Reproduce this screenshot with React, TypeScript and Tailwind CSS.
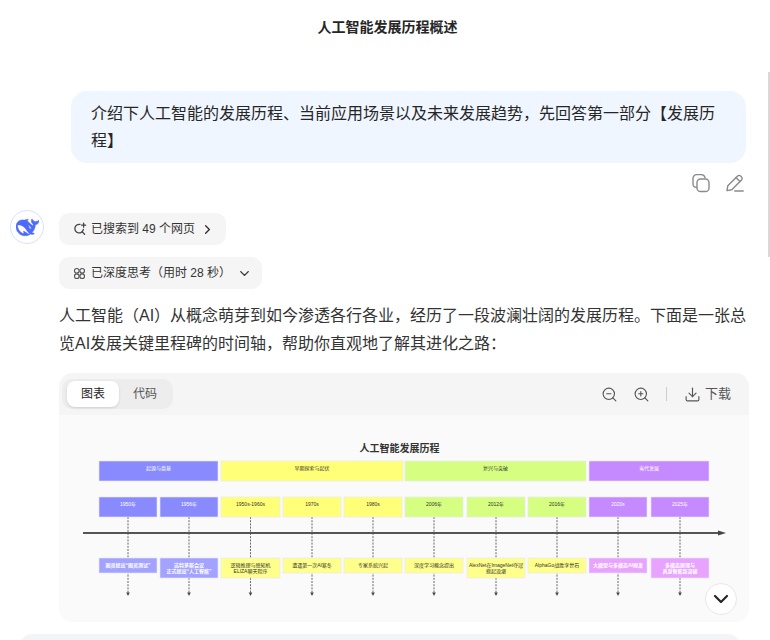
import React from "react";
import { ChevronRight, ChevronDown, ZoomIn, ZoomOut, Download } from "lucide-react";

const FONT = "'Liberation Sans','Noto Sans CJK SC',sans-serif";

type Box = { x: number; w: number; t: string; fill: string; c: string };
const periods: Box[] = [
  { x: 99, w: 119, t: "起源与奠基", fill: "#8a8aff", c: "#ffffff" },
  { x: 221, w: 182, t: "早期探索与起伏", fill: "#ffff78", c: "#333333" },
  { x: 405, w: 181, t: "复兴与突破", fill: "#d6ff82", c: "#333333" },
  { x: 589, w: 120, t: "当代发展", fill: "#c58aff", c: "#ffffff" },
];
const years: Box[] = [
  { x: 99, w: 58, t: "1950年", fill: "#8a8aff", c: "#ffffff" },
  { x: 160, w: 58, t: "1956年", fill: "#8a8aff", c: "#ffffff" },
  { x: 221, w: 59, t: "1950s-1960s", fill: "#ffff78", c: "#333333" },
  { x: 283, w: 58, t: "1970s", fill: "#ffff78", c: "#333333" },
  { x: 344, w: 58, t: "1980s", fill: "#ffff78", c: "#333333" },
  { x: 405, w: 58, t: "2006年", fill: "#d6ff82", c: "#333333" },
  { x: 467, w: 58, t: "2012年", fill: "#d6ff82", c: "#333333" },
  { x: 528, w: 58, t: "2016年", fill: "#d6ff82", c: "#333333" },
  { x: 589, w: 58, t: "2020s", fill: "#c58aff", c: "#ffffff" },
  { x: 651, w: 58, t: "2025年", fill: "#c58aff", c: "#ffffff" },
];
const events: { x: number; w: number; l: string[]; fill: string; c: string }[] = [
  { x: 99, w: 58, l: ["图灵提出“图灵测试”"], fill: "#a3a3ff", c: "#ffffff" },
  { x: 160, w: 58, l: ["达特茅斯会议", "正式提出“人工智能”"], fill: "#a3a3ff", c: "#ffffff" },
  { x: 221, w: 59, l: ["逻辑推理与感知机", "ELIZA聊天程序"], fill: "#ffff8c", c: "#333333" },
  { x: 283, w: 58, l: ["遭遇第一次AI寒冬"], fill: "#ffff8c", c: "#333333" },
  { x: 344, w: 58, l: ["专家系统兴起"], fill: "#ffff8c", c: "#333333" },
  { x: 405, w: 58, l: ["深度学习概念提出"], fill: "#ffff8c", c: "#333333" },
  { x: 467, w: 58, l: ["AlexNet在ImageNet夺冠", "掀起浪潮"], fill: "#ffff8c", c: "#333333" },
  { x: 528, w: 58, l: ["AlphaGo战胜李世石"], fill: "#ffff8c", c: "#333333" },
  { x: 589, w: 58, l: ["大模型与多模态AI爆发"], fill: "#e8a3ff", c: "#ffffff" },
  { x: 651, w: 58, l: ["多模态原理与", "具身智能新突破"], fill: "#e8a3ff", c: "#ffffff" },
];

function Timeline() {
  const ox = 59;
  const oy = 415;
  return (
    <svg width="690" height="207" viewBox={`${ox} ${oy} 690 207`} className="block">
      <text x="399.5" y="452" textAnchor="middle" fontSize="10" fontWeight="700" fill="#333333" fontFamily={FONT}>
        人工智能发展历程
      </text>
      {periods.map((p) => (
        <g key={p.t}>
          <rect x={p.x} y={461} width={p.w} height={20} fill={p.fill} stroke="#e6e6f5" strokeWidth="0.6" />
          <text x={p.x + p.w / 2} y={470} textAnchor="middle" fontSize="5" fill={p.c} fontFamily={FONT}>{p.t}</text>
        </g>
      ))}
      {years.map((p) => {
        const cx = p.x + p.w / 2;
        return (
          <g key={p.t}>
            <line x1={cx} y1={517} x2={cx} y2={593} stroke="#444444" strokeWidth="0.8" strokeDasharray="2 1.2" />
            <path d={`M${cx - 1.8} 592.5 L${cx + 1.8} 592.5 L${cx} 596 Z`} fill="#444444" />
            <rect x={p.x} y={497} width={p.w} height={20} fill={p.fill} stroke="#e6e6f5" strokeWidth="0.6" />
            <text x={cx} y={506} textAnchor="middle" fontSize="5" fill={p.c} fontFamily={FONT}>{p.t}</text>
          </g>
        );
      })}
      <line x1="83" y1="533" x2="720" y2="533" stroke="#555555" strokeWidth="2" />
      <path d="M718 530.5 L726 533 L718 535.5 Z" fill="#444444" />
      {events.map((p) => {
        const h = p.l.length > 1 ? 20 : 15;
        const cx = p.x + p.w / 2;
        return (
          <g key={p.x}>
            <rect x={p.x} y={558} width={p.w} height={h} fill={p.fill} stroke="#e6e6f5" strokeWidth="0.6" />
            {p.l.map((s, i) => (
              <text key={s} x={cx} y={p.l.length > 1 ? 567 + i * 6 : 567} textAnchor="middle" fontSize="5" fontWeight={p.c === "#ffffff" ? 700 : 400} fill={p.c} fontFamily={FONT}>{s}</text>
            ))}
          </g>
        );
      })}
    </svg>
  );
}

function WhaleLogo() {
  return (
    <svg width="23" height="23" viewBox="0 0 24 24" fill="#4d6bfe" stroke="#4d6bfe" strokeWidth="0.5">
      <path d="M23.748 4.482c-.254-.124-.364.113-.512.234-.051.039-.094.09-.137.136-.372.397-.806.657-1.373.626-.829-.046-1.537.214-2.163.848-.133-.782-.575-1.248-1.247-1.548-.352-.156-.708-.311-.955-.65-.172-.241-.219-.51-.305-.774-.055-.16-.11-.323-.293-.35-.2-.031-.278.136-.356.276-.313.572-.434 1.202-.422 1.84.027 1.436.633 2.58 1.838 3.393.137.093.172.187.129.323-.082.28-.18.552-.266.833-.055.179-.137.217-.329.14a5.526 5.526 0 01-1.736-1.18c-.857-.828-1.631-1.742-2.597-2.458a11.365 11.365 0 00-.689-.471c-.985-.957.13-1.743.388-1.836.27-.098.093-.432-.779-.428-.872.004-1.67.295-2.687.684a3.055 3.055 0 01-.465.137 9.597 9.597 0 00-2.883-.102c-1.885.21-3.39 1.102-4.497 2.623C.082 8.606-.231 10.684.152 12.85c.403 2.284 1.569 4.175 3.36 5.653 1.858 1.533 3.997 2.284 6.438 2.14 1.482-.085 3.133-.284 4.994-1.86.47.234.962.327 1.78.397.63.059 1.236-.03 1.705-.128.735-.156.684-.837.419-.961-2.155-1.004-1.682-.595-2.113-.926 1.096-1.296 2.746-2.642 3.392-7.003.05-.347.007-.565 0-.845-.004-.17.035-.237.23-.256a4.173 4.173 0 001.545-.475c1.396-.763 1.96-2.015 2.093-3.517.02-.23-.004-.467-.247-.588zM11.581 18c-2.089-1.642-3.102-2.183-3.52-2.16-.392.024-.321.471-.235.763.09.288.207.486.371.739.114.167.192.416-.113.603-.673.416-1.842-.14-1.897-.167-1.361-.802-2.5-1.86-3.301-3.307-.774-1.393-1.224-2.887-1.298-4.482-.02-.386.093-.522.477-.592a4.696 4.696 0 011.529-.039c2.132.312 3.946 1.265 5.468 2.774.868.86 1.525 1.887 2.202 2.891.72 1.066 1.494 2.082 2.48 2.914.348.292.625.514.891.677-.802.09-2.14.11-3.054-.614zm1-6.44a.306.306 0 01.415-.287.302.302 0 01.2.288.306.306 0 01-.31.307.303.303 0 01-.304-.308zm3.11 1.596c-.2.081-.399.151-.59.16a1.245 1.245 0 01-.798-.254c-.274-.23-.47-.358-.552-.758a1.73 1.73 0 01.016-.588c.07-.327-.008-.537-.239-.727-.187-.156-.426-.199-.688-.199a.559.559 0 01-.254-.078.253.253 0 01-.114-.358c.028-.054.16-.186.192-.21.356-.202.767-.136 1.146.016.352.144.618.408 1.001.782.391.451.462.576.685.914.176.265.336.537.445.848.067.195-.019.354-.25.452z" />
    </svg>
  );
}

function ThinkIcon() {
  return (
    <svg width="13" height="13" viewBox="0 0 13 13" fill="none" stroke="#555555" strokeWidth="1.1">
      <circle cx="3.8" cy="3.8" r="2.3" />
      <circle cx="9.2" cy="3.8" r="2.3" />
      <circle cx="3.8" cy="9.2" r="2.3" />
      <circle cx="9.2" cy="9.2" r="2.3" />
    </svg>
  );
}

function SearchIcon() {
  return (
    <svg width="14" height="14" viewBox="0 0 14 14" fill="none" stroke="#444444" strokeWidth="1.3" strokeLinecap="round">
      <path d="M7 2.4A4.3 4.3 0 1 0 10.4 7.4" />
      <path d="M9 9.6 11.6 12.2" />
      <path d="M10.6 1.2v4M8.6 3.2h4" />
    </svg>
  );
}

function CopyIcon() {
  return (
    <svg width="20" height="20" viewBox="0 0 20 20" fill="none" stroke="#8a8a8a" strokeWidth="1.4" strokeLinecap="round">
      <rect x="6" y="6" width="12" height="12.5" rx="3.6" />
      <path d="M5.6 14.4A3.6 3.6 0 0 1 2 11V5.2A3.6 3.6 0 0 1 5.6 1.6h4.8A3.8 3.8 0 0 1 14 4.6" />
    </svg>
  );
}

function PencilIcon() {
  return (
    <svg width="20" height="20" viewBox="0 0 20 20" fill="none" stroke="#8a8a8a" strokeWidth="1.4" strokeLinecap="round" strokeLinejoin="round">
      <path d="M2 17.6 2.8 12.8 12.6 3a2.1 2.1 0 0 1 3 0l.9.9a2.1 2.1 0 0 1 0 3L6.8 16.8Z" />
      <path d="M11 4.6 14.9 8.5" />
      <path d="M9.8 18h8.4" />
    </svg>
  );
}

export default function App() {
  return (
    <div className="relative h-[640px] w-[770px] overflow-hidden bg-white text-[#1f1f1f]" style={{ fontFamily: FONT }}>
      <div className="flex h-[55px] items-center justify-center pl-[5px] text-[14px] font-bold text-[#262626]">人工智能发展历程概述</div>

      <div className="ml-[71px] mt-[36px] w-[675px] rounded-[16px] bg-[#eff6ff] px-5 py-[9px] text-[16px] leading-[27px] text-[#262626]">
        介绍下人工智能的发展历程、当前应用场景以及未来发展趋势，先回答第一部分【发展历程】
      </div>

      <div className="mt-[10px] flex h-[20px] justify-end gap-[14px] pr-[25px]">
        <CopyIcon />
        <PencilIcon />
      </div>

      <div className="mt-[20px] flex">
        <div className="-mt-[3px] ml-[10px] flex h-[34px] w-[34px] shrink-0 items-center justify-center overflow-hidden rounded-full border border-[#d6e2ff] bg-white">
          <WhaleLogo />
        </div>
        <div className="ml-[15px] w-[690px]">
          <div className="flex h-[32px] w-[167px] items-center rounded-[10px] bg-[#f5f5f5] pl-[14px] text-[12px] text-[#333333]">
            <SearchIcon />
            <span className="ml-[4px]">已搜索到 49 个网页</span>
            <ChevronRight size={15} strokeWidth={2.2} className="ml-[5px]" />
          </div>
          <div className="mt-[12px] flex h-[32px] w-[203px] items-center rounded-[10px] bg-[#f5f5f5] pl-[14px] text-[12px] text-[#333333]">
            <ThinkIcon />
            <span className="ml-[5px]">已深度思考（用时 28 秒）</span>
            <ChevronDown size={15} strokeWidth={2.2} className="ml-[6px]" />
          </div>
          <p className="mt-[13px] text-[16px] leading-[28px] text-[#333333]">
            人工智能（AI）从概念萌芽到如今渗透各行各业，经历了一段波澜壮阔的发展历程。下面是一张总览AI发展关键里程碑的时间轴，帮助你直观地了解其进化之路：
          </p>

          <div className="mt-[15px] h-[249px] overflow-hidden rounded-[14px] bg-[#fafafa]">
            <div className="flex h-[42px] items-center justify-between bg-[#f5f5f5] pl-[3px] pr-[18px]">
              <div className="flex h-[30px] items-center rounded-[10px] bg-[#ededed] py-[2px] pl-[5px] pr-[2px] text-[12px]">
                <span className="flex h-[26px] w-[52px] items-center justify-center rounded-[8px] bg-white text-[#262626] shadow-sm">图表</span>
                <span className="flex h-[26px] w-[52px] items-center justify-center text-[#555555]">代码</span>
              </div>
              <div className="flex items-center text-[13px] text-[#555555]">
                <ZoomOut size={17} strokeWidth={1.6} />
                <ZoomIn size={17} strokeWidth={1.6} className="ml-[15px]" />
                <span className="ml-[16px] h-[14px] w-px bg-[#cccccc]" />
                <Download size={17} strokeWidth={1.6} className="ml-[17px]" />
                <span className="ml-[4px]">下载</span>
              </div>
            </div>
            <Timeline />
          </div>
        </div>
      </div>

      <button className="absolute left-[705px] top-[583px] flex h-[32px] w-[32px] items-center justify-center rounded-full border border-[#e8e8e8] bg-white text-[#262626]">
        <ChevronDown size={24} strokeWidth={2.2} />
      </button>

      <div className="absolute left-[18px] top-[634px] h-[30px] w-[724px] rounded-[20px] bg-[#f3f4f6]" />
      <div className="absolute right-0 top-[72px] h-[185px] w-[2px] bg-[#d9d9d9]" />
    </div>
  );
}
